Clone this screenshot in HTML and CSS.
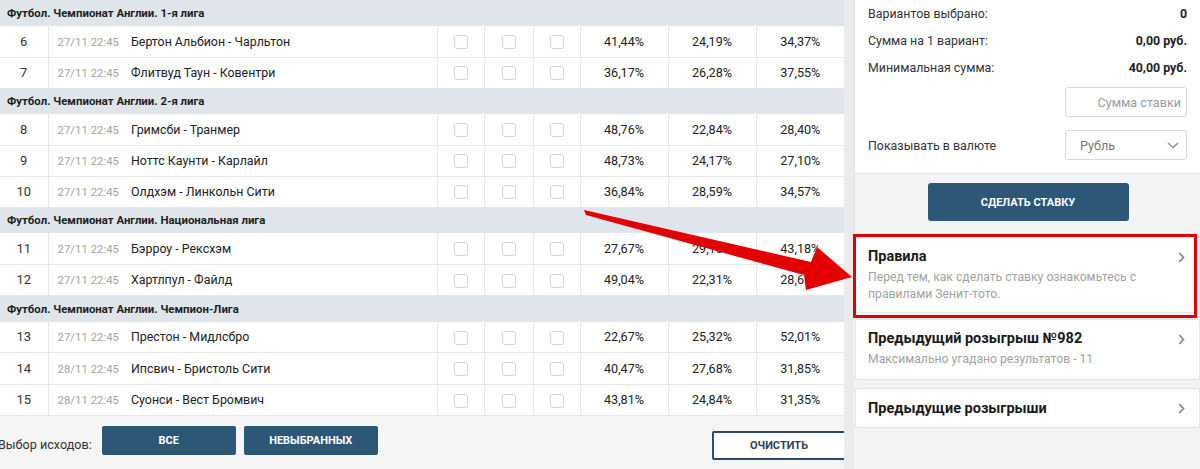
FILE: index.html
```html
<!DOCTYPE html>
<html lang="ru">
<head>
<meta charset="utf-8">
<title>Зенит-тото</title>
<link rel="stylesheet" href="styles.css">
</head>
<body>
<div class="page">
  <div class="main">
    <table class="grid">
      <colgroup>
        <col class="c-num"><col class="c-match"><col class="c-chk"><col class="c-chk2"><col class="c-chk"><col class="c-pct"><col class="c-pct"><col class="c-pct">
      </colgroup>
      <tbody>
        <tr class="league"><td colspan="8">Футбол. Чемпионат Англии. 1-я лига</td></tr>
        <tr><td class="num">6</td><td class="match"><span class="date">27/11 22:45</span><span class="teams">Бертон Альбион - Чарльтон</span></td><td><i class="box"></i></td><td><i class="box"></i></td><td><i class="box"></i></td><td class="pct">41,44%</td><td class="pct">24,19%</td><td class="pct">34,37%</td></tr>
        <tr><td class="num">7</td><td class="match"><span class="date">27/11 22:45</span><span class="teams">Флитвуд Таун - Ковентри</span></td><td><i class="box"></i></td><td><i class="box"></i></td><td><i class="box"></i></td><td class="pct">36,17%</td><td class="pct">26,28%</td><td class="pct">37,55%</td></tr>
        <tr class="league"><td colspan="8">Футбол. Чемпионат Англии. 2-я лига</td></tr>
        <tr><td class="num">8</td><td class="match"><span class="date">27/11 22:45</span><span class="teams">Гримсби - Транмер</span></td><td><i class="box"></i></td><td><i class="box"></i></td><td><i class="box"></i></td><td class="pct">48,76%</td><td class="pct">22,84%</td><td class="pct">28,40%</td></tr>
        <tr><td class="num">9</td><td class="match"><span class="date">27/11 22:45</span><span class="teams">Ноттс Каунти - Карлайл</span></td><td><i class="box"></i></td><td><i class="box"></i></td><td><i class="box"></i></td><td class="pct">48,73%</td><td class="pct">24,17%</td><td class="pct">27,10%</td></tr>
        <tr><td class="num">10</td><td class="match"><span class="date">27/11 22:45</span><span class="teams">Олдхэм - Линкольн Сити</span></td><td><i class="box"></i></td><td><i class="box"></i></td><td><i class="box"></i></td><td class="pct">36,84%</td><td class="pct">28,59%</td><td class="pct">34,57%</td></tr>
        <tr class="league"><td colspan="8">Футбол. Чемпионат Англии. Национальная лига</td></tr>
        <tr><td class="num">11</td><td class="match"><span class="date">27/11 22:45</span><span class="teams">Бэрроу - Рексхэм</span></td><td><i class="box"></i></td><td><i class="box"></i></td><td><i class="box"></i></td><td class="pct">27,67%</td><td class="pct">29,15%</td><td class="pct">43,18%</td></tr>
        <tr><td class="num">12</td><td class="match"><span class="date">27/11 22:45</span><span class="teams">Хартлпул - Файлд</span></td><td><i class="box"></i></td><td><i class="box"></i></td><td><i class="box"></i></td><td class="pct">49,04%</td><td class="pct">22,31%</td><td class="pct">28,65%</td></tr>
        <tr class="league"><td colspan="8">Футбол. Чемпионат Англии. Чемпион-Лига</td></tr>
        <tr><td class="num">13</td><td class="match"><span class="date">27/11 22:45</span><span class="teams">Престон - Мидлсбро</span></td><td><i class="box"></i></td><td><i class="box"></i></td><td><i class="box"></i></td><td class="pct">22,67%</td><td class="pct">25,32%</td><td class="pct">52,01%</td></tr>
        <tr><td class="num">14</td><td class="match"><span class="date">28/11 22:45</span><span class="teams">Ипсвич - Бристоль Сити</span></td><td><i class="box"></i></td><td><i class="box"></i></td><td><i class="box"></i></td><td class="pct">40,47%</td><td class="pct">27,68%</td><td class="pct">31,85%</td></tr>
        <tr><td class="num">15</td><td class="match"><span class="date">28/11 22:45</span><span class="teams">Суонси - Вест Бромвич</span></td><td><i class="box"></i></td><td><i class="box"></i></td><td><i class="box"></i></td><td class="pct">43,81%</td><td class="pct">24,84%</td><td class="pct">31,35%</td></tr>
      </tbody>
    </table>
    <div class="actions">
      <span class="actions-label">Выбор исходов:</span>
      <button class="btn btn-fill">Все</button>
      <button class="btn btn-fill">Невыбранных</button>
      <span class="spacer"></span>
      <button class="btn btn-outline">Очистить</button>
    </div>
  </div>
  <div class="strip"></div>
  <aside class="panel">
    <div class="summary">
      <div class="line"><span>Вариантов выбрано:</span><b>0</b></div>
      <div class="line"><span>Сумма на 1 вариант:</span><b>0,00 руб.</b></div>
      <div class="line"><span>Минимальная сумма:</span><b>40,00 руб.</b></div>
      <div class="field-row"><div class="input">Сумма ставки</div></div>
      <div class="field-row currency"><span>Показывать в валюте</span>
        <div class="select">Рубль
          <svg class="caret" width="12" height="7" viewBox="0 0 12 7"><path d="M1 1 L6 5.5 L11 1" fill="none" stroke="#8c8c8c" stroke-width="1.5"/></svg>
        </div>
      </div>
    </div>
    <div class="bet-area"><button class="btn btn-bet">Сделать ставку</button></div>
    <div class="card card-rules">
      <div class="card-title">Правила</div>
      <div class="card-text">Перед тем, как сделать ставку ознакомьтесь с<br>правилами Зенит-тото.</div>
      <svg class="chev" width="7" height="11" viewBox="0 0 7 11"><path d="M1.2 1 L5.5 5.5 L1.2 10" fill="none" stroke="#8a8a8a" stroke-width="1.8"/></svg>
    </div>
    <div class="card">
      <div class="card-title">Предыдущий розыгрыш №982</div>
      <div class="card-text">Максимально угадано результатов - 11</div>
      <svg class="chev" width="7" height="11" viewBox="0 0 7 11"><path d="M1.2 1 L5.5 5.5 L1.2 10" fill="none" stroke="#8a8a8a" stroke-width="1.8"/></svg>
    </div>
    <div class="card card-single">
      <div class="card-title">Предыдущие розыгрыши</div>
      <svg class="chev" width="7" height="11" viewBox="0 0 7 11"><path d="M1.2 1 L5.5 5.5 L1.2 10" fill="none" stroke="#8a8a8a" stroke-width="1.8"/></svg>
    </div>
  </aside>
  <div class="mark-box"></div>
  <svg class="mark-arrow" width="1200" height="469" viewBox="0 0 1200 469">
    <polygon points="584,210 811,262 817,247 852,277 806,290 804,275 586,215" fill="#e30000"/>
  </svg>
</div>
</body>
</html>
```
FILE: styles.css
```css
* { box-sizing: border-box; }
html, body { margin: 0; padding: 0; }
body {
  width: 1200px;
  height: 469px;
  overflow: hidden;
  background: #f5f5f5;
  font-family: Roboto, "Liberation Sans", Arial, sans-serif;
  color: #222;
}
.page {
  position: relative;
  display: flex;
  width: 1200px;
  height: 469px;
}
.main {
  width: 844px;
  flex: none;
  display: flex;
  flex-direction: column;
}
.grid {
  width: 844px;
  border-collapse: collapse;
  table-layout: fixed;
  background: #fff;
}
.c-num { width: 48px; }
.c-match { width: 389px; }
.c-chk { width: 47px; }
.c-chk2 { width: 49px; }
.c-pct { width: 88px; }
.grid td {
  height: 31px;
  padding: 0;
  border-bottom: 1px solid #e7e7e7;
  border-left: 1px solid #e7e7e7;
  text-align: center;
  font-size: 12.6px;
  color: #222;
  vertical-align: middle;
}
.grid tr:nth-child(n+9) td { height: 31.3px; }
.grid td:first-child { border-left: none; }
.grid tr.league td {
  height: 26px;
  background: #dfe5eb;
  border-bottom: none;
  text-align: left;
  padding-left: 7px;
  font-weight: 700;
  font-size: 11.4px;
  color: #1e1e1e;
}
.grid td.num { font-size: 13px; color: #333; }
.grid td.match { text-align: left; padding-left: 9px; }
.date { color: #a4a4a4; font-size: 11.4px; margin-right: 12px; }
.teams { color: #222; font-size: 12.4px; }
.box {
  display: inline-block;
  width: 14px;
  height: 14px;
  border: 1px solid #d3d3d3;
  border-radius: 3px;
  vertical-align: middle;
}
.actions {
  display: flex;
  align-items: flex-start;
  padding-top: 10px;
  gap: 8px;
}
.actions-label {
  margin-left: -2px;
  margin-right: 2px;
  font-size: 12.6px;
  color: #333;
  line-height: 28px;
  margin-top: 5px;
}
.spacer { flex: 1; }
.btn {
  font-family: Roboto, "Liberation Sans", Arial, sans-serif;
  font-weight: 700;
  font-size: 11px;
  text-transform: uppercase;
  border-radius: 2px;
  cursor: pointer;
}
.btn-fill {
  width: 134px;
  height: 29px;
  background: #2c5777;
  border: none;
  color: #fff;
}
.btn-outline {
  width: 134px;
  height: 29px;
  margin-top: 5px;
  margin-right: -2px;
  background: #fff;
  border: 2px solid #2f4a60;
  color: #2c4459;
}
.strip {
  width: 10px;
  flex: none;
  background: #ebebeb;
}
.panel {
  flex: 1;
  display: flex;
  flex-direction: column;
  background: #f3f4f6;
}
.summary {
  background: #fff;
  border-left: 1px solid #e2e2e2;
  border-bottom: 1px solid #e6e6e6;
  padding: 0 13px 13px 13px;
  font-size: 12.4px;
  color: #333;
}
.line {
  display: flex;
  justify-content: space-between;
  align-items: center;
  height: 27px;
}
.line b { font-weight: 700; color: #222; }
.field-row {
  display: flex;
  justify-content: space-between;
  align-items: center;
  margin-top: 6px;
}
.field-row .input { margin-left: auto; }
.field-row.currency { margin-top: 13px; }
.input, .select {
  width: 122px;
  height: 30px;
  border: 1px solid #d8d8d8;
  border-radius: 3px;
  background: #fff;
  font-size: 12.6px;
  display: flex;
  align-items: center;
}
.input {
  justify-content: flex-end;
  padding-right: 5px;
  color: #9a9a9a;
}
.select {
  padding: 0 7px 0 14px;
  color: #777;
  justify-content: space-between;
}
.bet-area {
  border-left: 1px solid #e2e2e2;
  padding: 9px 0 16px 0;
  display: flex;
  justify-content: center;
  padding-left: 1px;
}
.btn-bet {
  width: 201px;
  height: 38px;
  background: #2c5777;
  border: none;
  color: #fff;
  border-radius: 3px;
}
.card {
  position: relative;
  margin: 0 0 8px 1px;
  background: #fff;
  border: 1px solid #e4e4e4;
  border-radius: 2px;
  padding: 9px 40px 11px 12px;
}
.card-rules { padding-bottom: 9px; margin-bottom: 6px; }
.card-single { padding: 10px 40px 8px 12px; }
.card-title {
  font-size: 14.5px;
  font-weight: 700;
  color: #1a1a1a;
  line-height: 20px;
}
.card-text {
  font-size: 12.2px;
  line-height: 17px;
  color: #a2a2a2;
  margin-top: 2px;
}
.chev {
  position: absolute;
  right: 14px;
  top: 14px;
}
.mark-box {
  position: absolute;
  left: 853px;
  top: 234px;
  width: 344px;
  height: 84px;
  border: 3px solid #e30000;
  pointer-events: none;
}
.mark-arrow {
  position: absolute;
  left: 0;
  top: 0;
  pointer-events: none;
}
```
